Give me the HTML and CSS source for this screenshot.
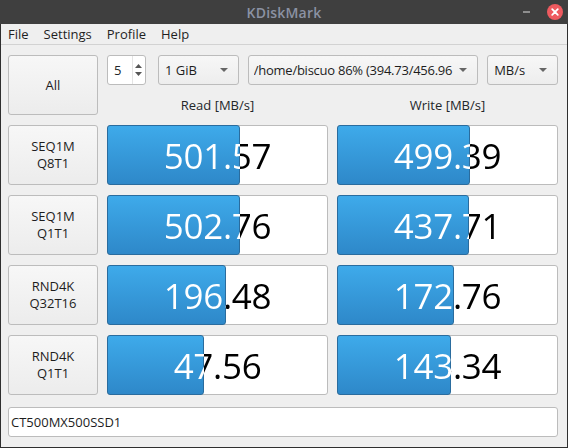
FILE: index.html
```html
<!DOCTYPE html>
<html>
<head>
<meta charset="utf-8">
<link rel="stylesheet" href="styles.css">
</head>
<body>
<div class="window">
  <div class="titlebar">
    <span class="title">KDiskMark</span>
    <span class="minimize"></span>
    <span class="close">
      <svg width="16" height="16" viewBox="0 0 16 16"><circle cx="8" cy="8" r="8" fill="#ee5a5f"/><path d="M5.2 5.2 L10.8 10.8 M10.8 5.2 L5.2 10.8" stroke="#fff" stroke-width="1.8" stroke-linecap="round"/></svg>
    </span>
  </div>
  <div class="menubar">
    <span class="menu-item">File</span>
    <span class="menu-item">Settings</span>
    <span class="menu-item">Profile</span>
    <span class="menu-item">Help</span>
  </div>
  <div class="content">
    <div class="grid">
      <div class="btn all">All</div>
      <div class="controls">
        <div class="spin">
          <span class="spin-val">5</span>
          <span class="spin-arrows">
            <svg width="9" height="20" viewBox="0 0 9 20"><path d="M1 8 L4.5 4 L8 8 Z" fill="#555"/><path d="M1 12 L4.5 16 L8 12 Z" fill="#555"/></svg>
          </span>
        </div>
        <div class="combo c-size"><span class="combo-text">1 GiB</span><span class="arrow"></span></div>
        <div class="combo c-path"><span class="combo-text path-text">/home/biscuo 86% (394.73/456.96</span><span class="arrow"></span></div>
        <div class="combo c-unit"><span class="combo-text">MB/s</span><span class="arrow"></span></div>
      </div>
      <div class="head">Read [MB/s]</div>
      <div class="head">Write [MB/s]</div>

      <div class="btn label">SEQ1M<br>Q8T1</div>
      <div class="bar" style="--w:133px"><div class="fill"></div><div class="val">501.57</div></div>
      <div class="bar" style="--w:133px"><div class="fill"></div><div class="val">499.39</div></div>

      <div class="btn label">SEQ1M<br>Q1T1</div>
      <div class="bar" style="--w:133px"><div class="fill"></div><div class="val">502.76</div></div>
      <div class="bar" style="--w:132px"><div class="fill"></div><div class="val">437.71</div></div>

      <div class="btn label">RND4K<br>Q32T16</div>
      <div class="bar" style="--w:119px"><div class="fill"></div><div class="val">196.48</div></div>
      <div class="bar" style="--w:117px"><div class="fill"></div><div class="val">172.76</div></div>

      <div class="btn label">RND4K<br>Q1T1</div>
      <div class="bar" style="--w:97px"><div class="fill"></div><div class="val">47.56</div></div>
      <div class="bar" style="--w:114px"><div class="fill"></div><div class="val">143.34</div></div>
    </div>
    <div class="field">CT500MX500SSD1</div>
  </div>
</div>
</body>
</html>
```
FILE: styles.css
```css
html, body {
  margin: 0;
  padding: 0;
  background: #efefef;
}
body {
  width: 568px;
  height: 448px;
  overflow: hidden;
  font-family: "Open Sans", "Noto Sans", sans-serif;
  font-size: 13px;
  color: #232629;
}
.window {
  width: 568px;
  height: 448px;
  box-sizing: border-box;
  border: 1px solid #2f2f2f;
  border-top: none;
  display: flex;
  flex-direction: column;
  background: #efefef;
}
.titlebar {
  height: 24px;
  background: #3f3f3f;
  margin: 0 -1px;
  position: relative;
  display: flex;
  align-items: center;
  justify-content: center;
}
.title {
  color: #8b92a3;
  font-weight: 600;
  font-size: 14px;
  letter-spacing: 0.2px;
}
.minimize {
  position: absolute;
  left: 523px;
  top: 11px;
  width: 7px;
  height: 2px;
  background: #8e8e8e;
}
.close {
  position: absolute;
  left: 547px;
  top: 4px;
  width: 16px;
  height: 16px;
}
.close svg { display: block; }
.menubar {
  height: 20px;
  border-bottom: 1px solid #d2d2d2;
  display: flex;
  align-items: center;
  padding-left: 7px;
}
.menu-item {
  margin-right: 15px;
  color: #1f1f1f;
  font-size: 13px;
}
.content {
  padding: 10px 9px 0 7px;
}
.grid {
  display: grid;
  grid-template-columns: 90px 221px 221px;
  grid-template-rows: 30px 20px 60px 60px 60px 60px;
  column-gap: 9px;
  row-gap: 10px;
}
.btn {
  box-sizing: border-box;
  border: 1px solid #bcbcbc;
  border-radius: 3px;
  background: linear-gradient(#f7f7f7, #ececec);
  display: flex;
  align-items: center;
  justify-content: center;
  text-align: center;
  color: #1d1d1d;
}
.all {
  grid-row: 1 / 3;
  font-size: 13px;
}
.label {
  font-size: 13px;
  line-height: 17px;
}
.controls {
  grid-column: 2 / 4;
  display: flex;
  gap: 9px;
}
.spin {
  box-sizing: border-box;
  width: 39px;
  height: 30px;
  border: 1px solid #bcbcbc;
  border-radius: 3px;
  background: #fff;
  display: flex;
  align-items: center;
  justify-content: space-between;
  margin-right: 3px;
}
.spin-val {
  padding-left: 6px;
}
.spin-arrows {
  width: 11px;
  height: 28px;
  display: flex;
  align-items: center;
  justify-content: center;
  border-left: 1px solid #e4e4e4;
  margin-right: 1px;
}
.spin-arrows svg { display: block; }
.combo {
  box-sizing: border-box;
  height: 30px;
  border: 1px solid #bcbcbc;
  border-radius: 3px;
  background: linear-gradient(#f7f7f7, #ededed);
  display: flex;
  align-items: center;
  padding: 0 10px 0 6px;
  gap: 6px;
  color: #1d1d1d;
}
.combo-text {
  flex: 1;
  white-space: nowrap;
  overflow: hidden;
}
.path-text {
  letter-spacing: -0.25px;
}
.arrow {
  width: 0;
  height: 0;
  border-left: 4px solid transparent;
  border-right: 4px solid transparent;
  border-top: 4px solid #666;
  flex: none;
}
.c-size { width: 81px; }
.c-path { width: 231px; padding-left: 5px; gap: 4px; }
.c-unit { width: 71px; }
.head {
  display: flex;
  align-items: center;
  justify-content: center;
  color: #232629;
}
.bar {
  position: relative;
  box-sizing: border-box;
  border: 1px solid #bcbcbc;
  border-radius: 3px;
  background: #fff;
}
.fill {
  position: absolute;
  left: -1px;
  top: -1px;
  bottom: -1px;
  width: var(--w);
  box-sizing: border-box;
  border: 1px solid #2a6c9e;
  border-radius: 3px;
  background: linear-gradient(#3eaaea, #2e88c9);
}
.val {
  position: relative;
  height: 100%;
  display: flex;
  align-items: center;
  justify-content: center;
  font-size: 35px;
  letter-spacing: -0.3px;
  background: linear-gradient(to right, #fff calc(var(--w) - 1px), #000 calc(var(--w) - 1px));
  -webkit-background-clip: text;
  background-clip: text;
  color: transparent;
}
.field {
  box-sizing: border-box;
  margin-top: 12px;
  height: 30px;
  width: 550px;
  border: 1px solid #bcbcbc;
  border-radius: 3px;
  background: #fff;
  display: flex;
  align-items: center;
  padding-left: 2px;
  color: #1d1d1d;
}
```
